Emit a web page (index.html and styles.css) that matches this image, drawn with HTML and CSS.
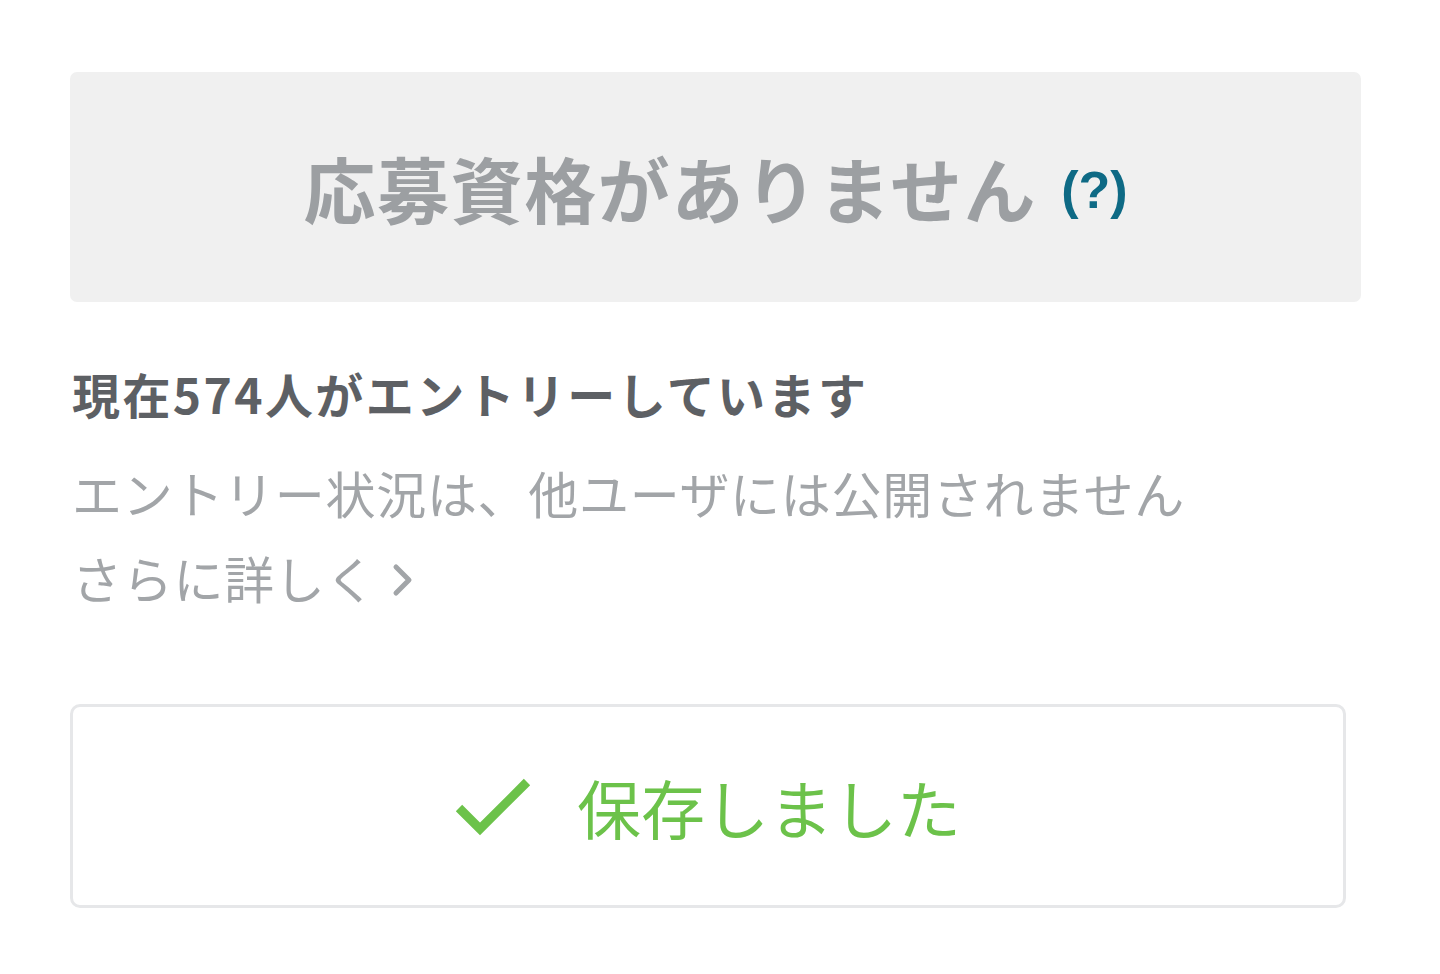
FILE: index.html
```html
<!DOCTYPE html>
<html lang="ja">
<head>
<meta charset="utf-8">
<link rel="stylesheet" href="styles.css">
</head>
<body>
<div class="page">
  <div class="notice">
    <span class="notice-text">応募資格がありません</span>
    <span class="help">(?)</span>
  </div>
  <h2 class="count">現在574人がエントリーしています</h2>
  <p class="note">エントリー状況は、他ユーザには公開されません<br>
    <a class="more">さらに詳しく<svg class="chev" width="22" height="34" viewBox="0 0 22 34"><path d="M4 4 L17 17 L4 30" fill="none" stroke="#a2a5a8" stroke-width="5" stroke-linecap="round" stroke-linejoin="round"/></svg></a>
  </p>
  <button class="saved">
    <svg class="check" width="76" height="58" viewBox="0 0 76 58"><path d="M4 30 L25 51 L72 4" fill="none" stroke="#6cc24a" stroke-width="9"/></svg>
    <span>保存しました</span>
  </button>
</div>
</body>
</html>
```
FILE: styles.css
```css
html, body {
  margin: 0;
  padding: 0;
  background: #ffffff;
}
body {
  font-family: "Noto Sans CJK JP", "Noto Sans", sans-serif;
}
.page {
  padding: 72px 79px 0 70px;
  display: flex;
  flex-direction: column;
  align-items: flex-start;
}
.notice {
  box-sizing: border-box;
  width: 1291px;
  height: 230px;
  background: #f0f0f0;
  border-radius: 7px;
  display: flex;
  align-items: center;
  justify-content: center;
  gap: 24px;
}
.notice-text {
  font-size: 72px;
  font-weight: 700;
  color: #9c9fa2;
  line-height: 1;
  letter-spacing: 1.6px;
}
.help {
  font-family: "Liberation Sans", "Noto Sans", sans-serif;
  font-size: 52px;
  font-weight: 700;
  color: #0e6a85;
  line-height: 1;
  margin-top: 6px;
}
.count {
  margin: 56px 0 0 2px;
  font-size: 48px;
  font-weight: 700;
  color: #5d6064;
  line-height: 70px;
  letter-spacing: 2.4px;
}
.note {
  margin: 22px 0 0 2px;
  font-size: 50px;
  font-weight: 400;
  color: #a2a5a8;
  line-height: 85px;
  letter-spacing: 0.7px;
}
.more {
  display: inline-flex;
  align-items: center;
  gap: 16px;
}
.chev {
  margin-top: 4px;
}
.saved {
  margin-top: 84px;
  box-sizing: border-box;
  width: 1276px;
  height: 204px;
  background: #ffffff;
  border: 3px solid #e6e7e9;
  border-radius: 10px;
  display: flex;
  align-items: center;
  justify-content: center;
  gap: 46px;
  font-family: "Noto Sans CJK JP", "Noto Sans", sans-serif;
  font-size: 64px;
  font-weight: 400;
  color: #6cc24a;
  padding: 0;
}
.saved span {
  line-height: 1;
  letter-spacing: 0;
}
.check {
  margin-top: 2px;
}
```
